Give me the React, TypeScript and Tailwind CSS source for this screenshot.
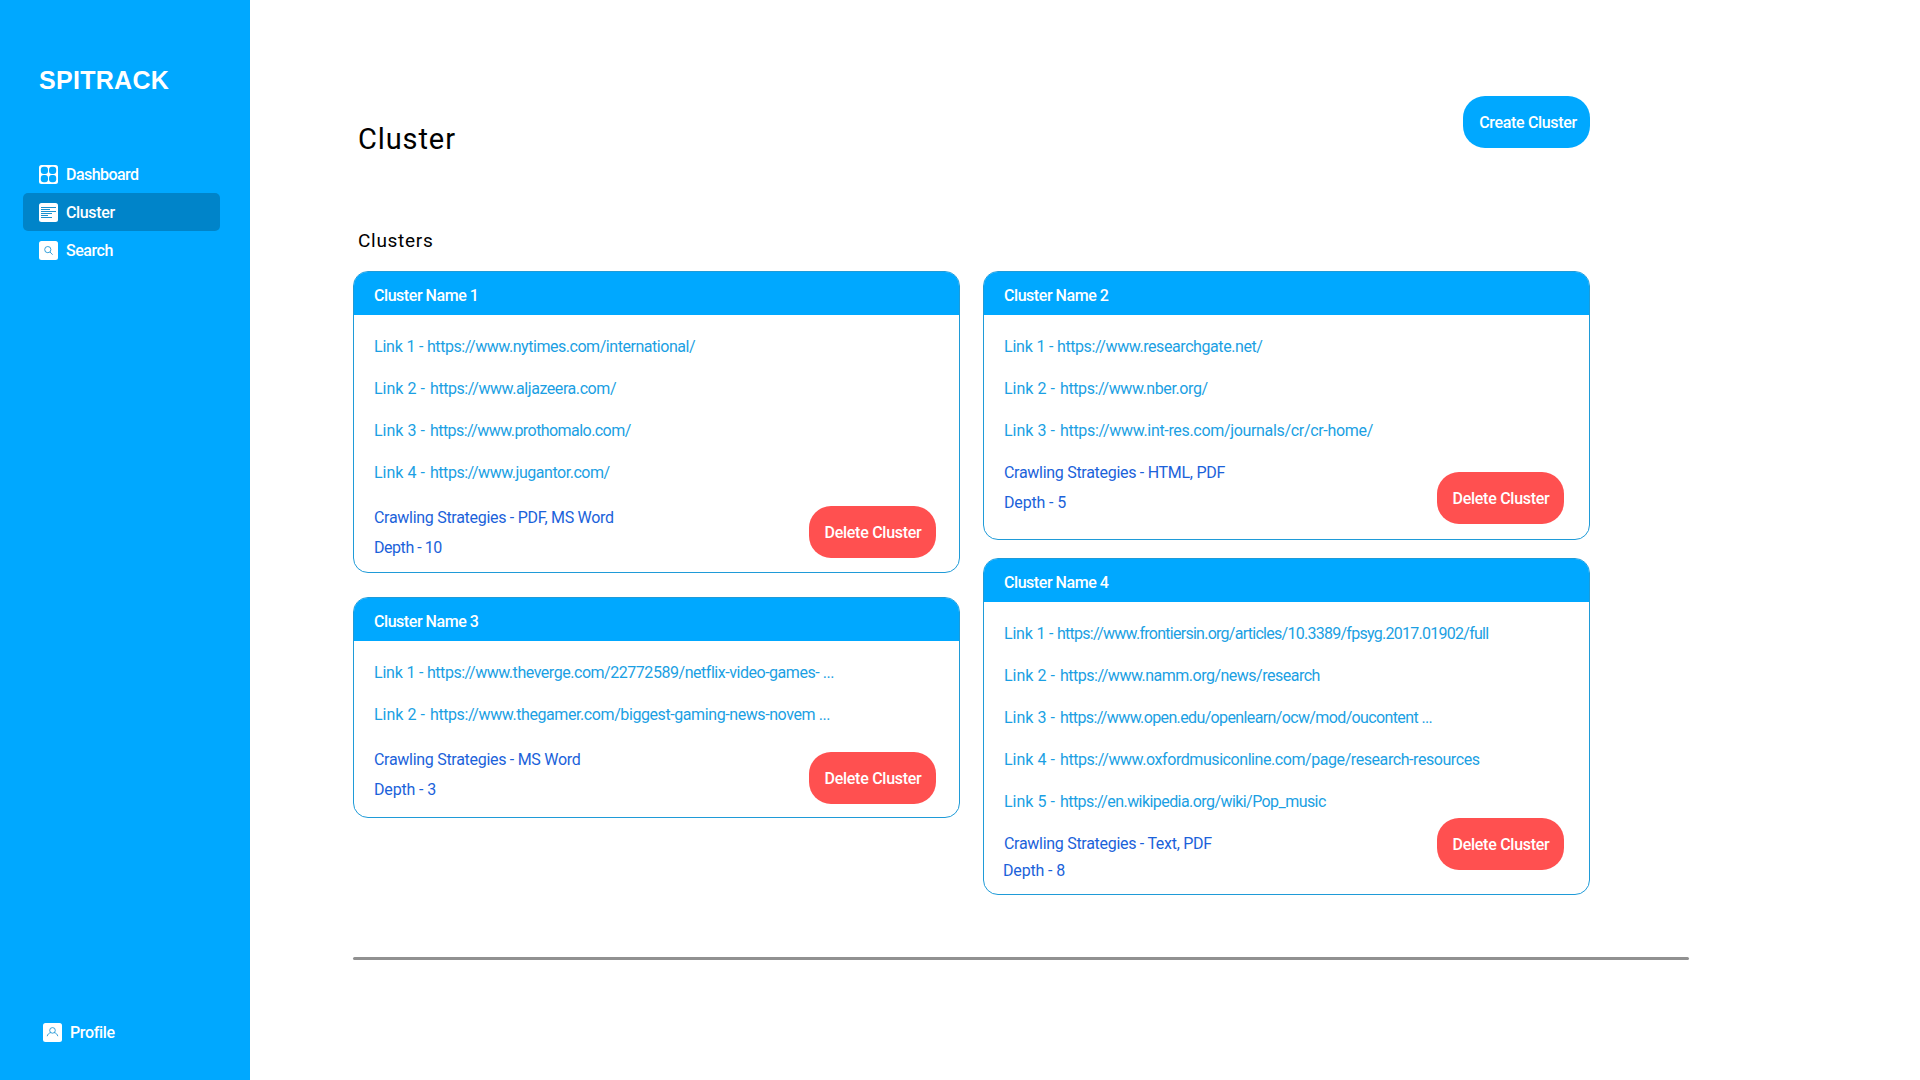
type Link = { url: string; tracking: string };
type Cluster = {
  name: string;
  links: Link[];
  strategies: string;
  depth: string;
  footer: string;
  row: string;
  depthTracking: string;
  button: string;
  height: string;
};

const left: Cluster[] = [
  {
    name: "Cluster Name 1",
    links: [
      { url: "https://www.nytimes.com/international/", tracking: "tracking-[-0.458px]" },
      { url: "https://www.aljazeera.com/", tracking: "tracking-[-0.43px]" },
      { url: "https://www.prothomalo.com/", tracking: "tracking-[-0.561px]" },
      { url: "https://www.jugantor.com/", tracking: "tracking-[-0.467px]" },
    ],
    strategies: "PDF, MS Word",
    depth: "Depth - 10",
    footer: "mt-[9px]",
    row: "h-[30px]",
    depthTracking: "tracking-[-0.45px]",
    button: "mt-1 mr-[23px]",
    height: "h-[302px]",
  },
  {
    name: "Cluster Name 3",
    links: [
      { url: "https://www.theverge.com/22772589/netflix-video-games- ...", tracking: "tracking-[-0.463px]" },
      { url: "https://www.thegamer.com/biggest-gaming-news-novem ...", tracking: "tracking-[-0.415px]" },
    ],
    strategies: "MS Word",
    depth: "Depth - 3",
    footer: "mt-[9px]",
    row: "h-[30px]",
    depthTracking: "tracking-[-0.15px]",
    button: "mt-2 mr-[23px]",
    height: "h-[221px]",
  },
];

const right: Cluster[] = [
  {
    name: "Cluster Name 2",
    links: [
      { url: "https://www.researchgate.net/", tracking: "tracking-[-0.416px]" },
      { url: "https://www.nber.org/", tracking: "tracking-[-0.402px]" },
      { url: "https://www.int-res.com/journals/cr/cr-home/", tracking: "tracking-[-0.322px]" },
    ],
    strategies: "HTML, PDF",
    depth: "Depth - 5",
    footer: "mt-1.5",
    row: "h-[30px]",
    depthTracking: "tracking-[-0.15px]",
    button: "mt-[15px] mr-[25px]",
    height: "h-[269px]",
  },
  {
    name: "Cluster Name 4",
    links: [
      { url: "https://www.frontiersin.org/articles/10.3389/fpsyg.2017.01902/full", tracking: "tracking-[-0.73px]" },
      { url: "https://www.namm.org/news/research", tracking: "tracking-[-0.499px]" },
      { url: "https://www.open.edu/openlearn/ocw/mod/oucontent ...", tracking: "tracking-[-0.626px]" },
      { url: "https://www.oxfordmusiconline.com/page/research-resources", tracking: "tracking-[-0.43px]" },
      { url: "https://en.wikipedia.org/wiki/Pop_music", tracking: "tracking-[-0.566px]" },
    ],
    strategies: "Text, PDF",
    depth: "Depth - 8",
    footer: "mt-[7px]",
    row: "h-[27px]",
    depthTracking: "tracking-[-0.15px] -ml-px",
    button: "-mt-[11px] mr-[25px]",
    height: "h-[337px]",
  },
];

function ClusterCard({ c }: { c: Cluster }) {
  return (
    <article className={`flex w-[607px] flex-col overflow-hidden rounded-[15px] border border-[#1f9bd8] ${c.height}`}>
      <h3 className="flex h-[43px] shrink-0 items-center bg-[#00a8ff] pl-5 pt-[5px] font-medium tracking-[-0.446px] text-white">
        {c.name}
      </h3>
      <ul className="pl-5 pt-[11px] text-[#1b9fe3]">
        {c.links.map((l, i) => (
          <li key={l.url} className="flex h-[42px] items-center font-[450] whitespace-nowrap">
            <span className={i === 0 ? "w-[53px] tracking-[-0.2px]" : "w-14"}>Link {i + 1} -</span>
            <span className={l.tracking}>{l.url}</span>
          </li>
        ))}
      </ul>
      <div className={`-mb-px flex items-start justify-between pl-5 text-[#1b62da] ${c.footer}`}>
        <div className="font-[450]">
          <p className={`flex items-center tracking-[-0.29px] ${c.row}`}>Crawling Strategies - {c.strategies}</p>
          <p className={`flex items-center ${c.row} ${c.depthTracking}`}>{c.depth}</p>
        </div>
        <button
          className={`-translate-y-px h-[52px] w-[127px] shrink-0 rounded-[22px] bg-[#ff5050] pt-px pl-px font-medium tracking-[-0.268px] text-white ${c.button}`}
        >
          Delete Cluster
        </button>
      </div>
    </article>
  );
}

function DashboardIcon() {
  return (
    <svg viewBox="0 0 19 19" className="size-[19px]">
      <rect width="19" height="19" rx="2.5" fill="#fff" />
      <g fill="#00a8ff">
        <rect x="1.8" y="1.8" width="7.2" height="7.2" rx="2.9" />
        <rect x="10" y="1.8" width="7.2" height="7.2" rx="2.9" />
        <rect x="1.8" y="10" width="7.2" height="7.2" rx="2.9" />
        <rect x="10" y="10" width="7.2" height="7.2" rx="2.9" />
      </g>
    </svg>
  );
}

function ClusterIcon() {
  return (
    <svg viewBox="0 0 19 19" className="size-[19px]">
      <rect width="19" height="19" rx="2.5" fill="#fff" />
      <path d="M2 4.5h15M2 6.5h9M2 8.5h15M2 10.5h11M2 12.5h7M2 14.5h11" stroke="#0084c9" strokeWidth="0.9" />
    </svg>
  );
}

function SearchIcon() {
  return (
    <svg viewBox="0 0 19 19" className="size-[19px]" fill="none">
      <rect width="19" height="19" rx="2.5" fill="#fff" />
      <circle cx="8.8" cy="8.6" r="3.1" stroke="#2196d6" strokeWidth="0.9" />
      <path d="M11 11l2.6 2.7" stroke="#2196d6" strokeWidth="0.9" />
    </svg>
  );
}

function ProfileIcon() {
  return (
    <svg viewBox="0 0 19 19" className="size-[19px]" fill="none" stroke="#2196d6" strokeWidth="0.9">
      <rect width="19" height="19" rx="2.5" fill="#fff" stroke="none" />
      <circle cx="9.5" cy="7.4" r="2.8" />
      <path d="M4.2 13.2c.5-2 1.8-3.2 3.6-3.6M14.8 13.2c-.5-2-1.8-3.2-3.6-3.6" />
    </svg>
  );
}

export default function App() {
  return (
    <div className="flex h-[1080px] w-[1920px] overflow-hidden bg-white font-['Roboto',sans-serif] text-base leading-none">
      <aside className="flex w-[250px] shrink-0 flex-col bg-[#00a8ff] font-medium text-white">
        <div className="mt-[68px] ml-[39px] h-6 font-['Liberation_Sans',sans-serif] text-[25px] leading-6 font-bold tracking-[0.3px]">
          SPITRACK
        </div>
        <nav className="mt-[63px] ml-[23px] flex w-[197px] flex-col">
          <a className="flex h-[38px] items-center gap-2 pl-4">
            <DashboardIcon />
            <span className="pt-px tracking-[-0.55px]">Dashboard</span>
          </a>
          <a className="flex h-[38px] items-center gap-2 rounded-[5px] bg-[#0084c9] pl-4">
            <ClusterIcon />
            <span className="pt-px tracking-[-0.35px]">Cluster</span>
          </a>
          <a className="flex h-[38px] items-center gap-2 pl-4">
            <SearchIcon />
            <span className="pt-px tracking-[-0.45px]">Search</span>
          </a>
        </nav>
        <a className="mt-auto mb-[29px] ml-[43px] flex h-[38px] items-center gap-2">
          <ProfileIcon />
          <span className="pt-px tracking-[-0.35px]">Profile</span>
        </a>
      </aside>
      <main className="ml-[103px] flex w-[1336px] flex-col">
        <header className="mt-24 flex h-[52px] w-[1237px] items-start justify-between">
          <h1 className="mt-[29px] ml-[5px] text-[29px] leading-none tracking-[0.9px]">Cluster</h1>
          <button className="h-[52px] w-[127px] rounded-[22px] bg-[#00a8ff] pt-px pl-[3px] font-medium tracking-[-0.33px] text-white">
            Create Cluster
          </button>
        </header>
        <h2 className="mt-[83px] ml-[5px] text-[19px] leading-[19px] tracking-[0.711px]">Clusters</h2>
        <section className="mt-[21px] flex items-start gap-[23px]">
          <div className="flex flex-col gap-6">
            {left.map((c) => (
              <ClusterCard key={c.name} c={c} />
            ))}
          </div>
          <div className="flex flex-col gap-[18px]">
            {right.map((c) => (
              <ClusterCard key={c.name} c={c} />
            ))}
          </div>
        </section>
        <hr className="mt-[62px] h-[3px] rounded-full border-0 bg-[#919191]" />
      </main>
    </div>
  );
}
